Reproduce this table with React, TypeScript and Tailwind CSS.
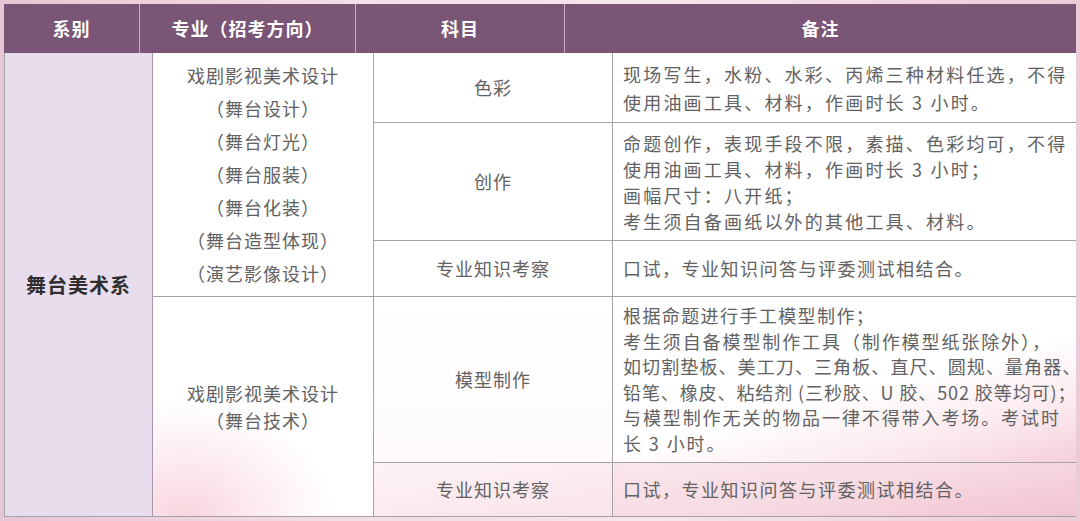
import React from "react";

const cell = "border-l border-t border-[#a3a3a3] flex items-center justify-center text-center";

export default function App() {
  return (
    <div className="w-[1080px] h-[521px] overflow-hidden bg-[linear-gradient(90deg,#e7c6d6_0%,#f3dce6_30%,#f7e6ec_60%,#eccbd9_100%)] pt-[4px] px-[4px] font-['Noto_Sans_CJK_SC','Noto_Sans',sans-serif] text-[#626262] text-[18px]">
      {/* header */}
      <div className="grid grid-cols-[135px_216px_209px_512px] h-[49px] bg-[#7a5575] text-white font-bold text-[18px] tracking-[1px]">
        <div className="flex items-center justify-center">系别</div>
        <div className="flex items-center justify-center border-l border-[#c9aac2]">专业（招考方向）</div>
        <div className="flex items-center justify-center border-l border-[#c9aac2]">科目</div>
        <div className="flex items-center justify-center border-l border-[#c9aac2]">备注</div>
      </div>
      {/* body */}
      <div className="grid grid-cols-[148px_221px_239px_464px] grid-rows-[69px_118px_56px_166px_54px] border-r border-b border-[#a3a3a3]">
        <div className="row-span-5 col-start-1 row-start-1 border-l border-[#a3a3a3] bg-[#e7dded] flex items-center justify-center font-bold text-[20px] text-[#2f2f2f] tracking-[1px]">
          舞台美术系
        </div>
        <div className={`${cell} !border-t-0 border-l-[#a896aa] row-span-3 col-start-2 row-start-1 bg-white flex-col leading-[33px] tracking-[1px]`}>
          <div>戏剧影视美术设计</div>
          <div>（舞台设计）</div>
          <div>（舞台灯光）</div>
          <div>（舞台服装）</div>
          <div>（舞台化装）</div>
          <div>（舞台造型体现）</div>
          <div>（演艺影像设计）</div>
        </div>
        <div className={`${cell} !border-t-0 col-start-3 row-start-1 bg-white tracking-[1px]`}>色彩</div>
        <div className={`${cell} !border-t-0 col-start-4 row-start-1 bg-white !justify-start !text-left pl-[10px] leading-[28px] tracking-[2.2px] whitespace-nowrap`}>
          <div>
            <div>现场写生，水粉、水彩、丙烯三种材料任选，不得</div>
            <div>使用油画工具、材料，作画时长 3 小时。</div>
          </div>
        </div>
        <div className={`${cell} col-start-3 row-start-2 bg-white tracking-[1px]`}>创作</div>
        <div className={`${cell} col-start-4 row-start-2 bg-white !justify-start !text-left pl-[10px] leading-[26px] tracking-[2.2px] whitespace-nowrap`}>
          <div>
            <div>命题创作，表现手段不限，素描、色彩均可，不得</div>
            <div>使用油画工具、材料，作画时长 3 小时；</div>
            <div>画幅尺寸：八开纸；</div>
            <div>考生须自备画纸以外的其他工具、材料。</div>
          </div>
        </div>
        <div className={`${cell} col-start-3 row-start-3 bg-white tracking-[1px]`}>专业知识考察</div>
        <div className={`${cell} col-start-4 row-start-3 bg-white !justify-start pl-[10px] tracking-[1.5px]`}>口试，专业知识问答与评委测试相结合。</div>

        <div className={`${cell} border-l-[#a896aa] row-span-2 col-start-2 row-start-4 bg-[radial-gradient(ellipse_90%_70%_at_15%_100%,#f9d5de_0%,#fdf0f3_45%,#ffffff_75%)] flex-col leading-[27px] tracking-[1px]`}>
          <div>戏剧影视美术设计</div>
          <div>（舞台技术）</div>
        </div>
        <div className={`${cell} col-start-3 row-start-4 bg-[linear-gradient(180deg,#ffffff_0%,#fefafb_100%)] tracking-[1px]`}>模型制作</div>
        <div className={`${cell} col-start-4 row-start-4 bg-[linear-gradient(165deg,#ffffff_0%,#ffffff_55%,#fbe9ee_80%,#f5cfdb_100%)] !justify-start !text-left pl-[10px] leading-[25.5px] whitespace-nowrap`}>
          <div>
            <div className="tracking-[1.4px]">根据命题进行手工模型制作；</div>
            <div className="tracking-[1.9px]">考生须自备模型制作工具（制作模型纸张除外），</div>
            <div className="tracking-[1.1px]">如切割垫板、美工刀、三角板、直尺、圆规、量角器、</div>
            <div className="tracking-[0.9px]">铅笔、橡皮、粘结剂 (三秒胶、U 胶、502 胶等均可)；</div>
            <div className="tracking-[1.9px]">与模型制作无关的物品一律不得带入考场。考试时</div>
            <div className="tracking-[1.9px]">长 3 小时。</div>
          </div>
        </div>
        <div className={`${cell} col-start-3 row-start-5 bg-[linear-gradient(170deg,#fdf3f6_0%,#f9e4ea_100%)] tracking-[1px]`}>专业知识考察</div>
        <div className={`${cell} col-start-4 row-start-5 bg-[linear-gradient(170deg,#fbe6ec_0%,#f7dbe3_50%,#f1c3d2_100%)] !justify-start pl-[10px] tracking-[1.5px]`}>口试，专业知识问答与评委测试相结合。</div>
      </div>
    </div>
  );
}
